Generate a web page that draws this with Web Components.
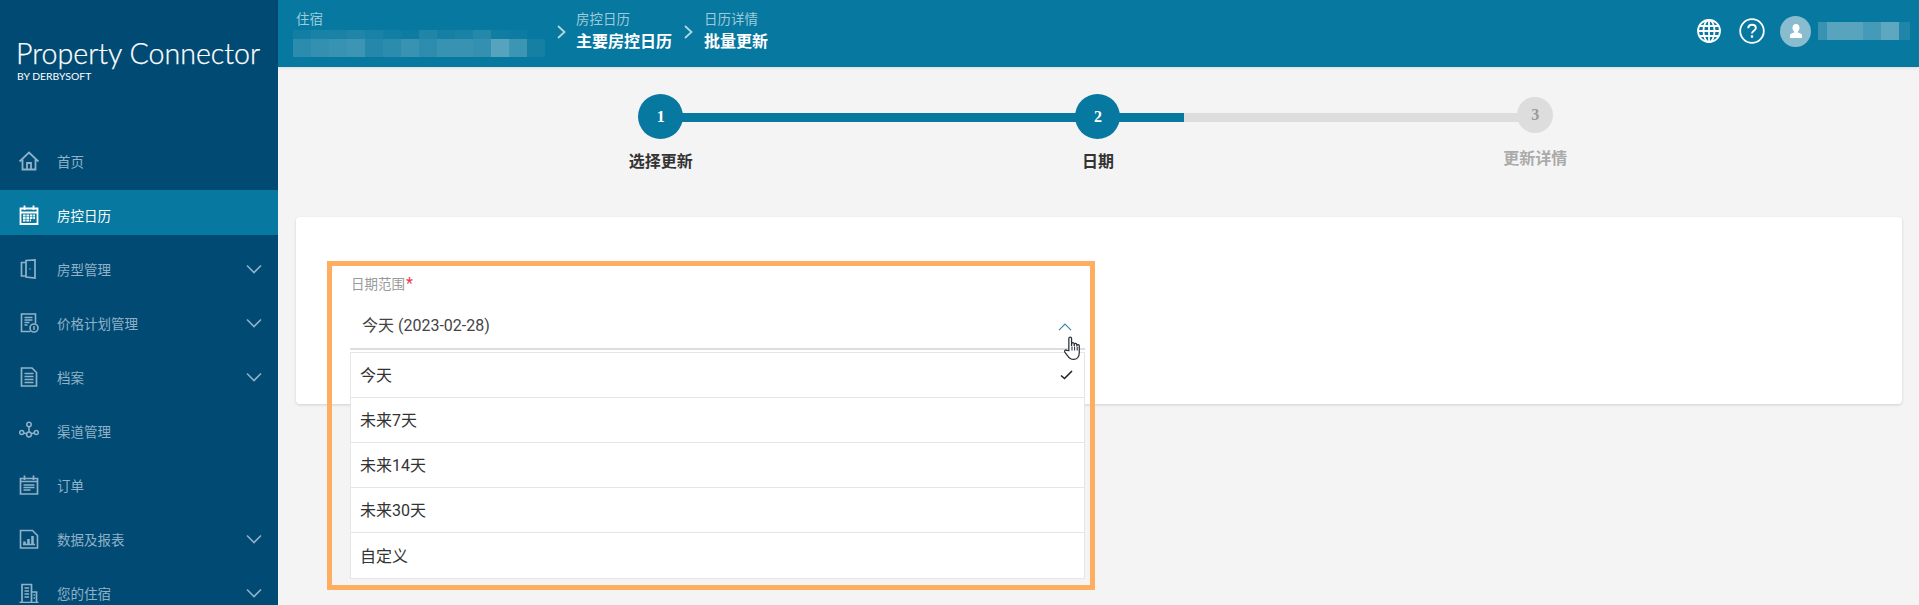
<!DOCTYPE html>
<html lang="zh">
<head>
<meta charset="utf-8">
<title>Property Connector</title>
<style>
  html, body {
    background: #f4f4f4;
    color: #333;
    font-family: Roboto, "Noto Sans CJK SC", sans-serif;
    height: 605px;
    margin: 0;
    overflow: hidden;
  }

  .app {
    display: flex;
    height: 605px;
  }

  .main {
    display: flex;
    flex: 1;
    flex-direction: column;
    min-width: 0;
  }

  .content {
    padding: 0 17px 0 18px;
  }
</style>
</head>
<body>
<div class="app">
  <pc-sidebar>
    <pc-nav-item icon="home" label="首页"></pc-nav-item>
    <pc-nav-item icon="calendar" label="房控日历" active></pc-nav-item>
    <pc-nav-item icon="door" label="房型管理" expandable></pc-nav-item>
    <pc-nav-item icon="rate" label="价格计划管理" expandable></pc-nav-item>
    <pc-nav-item icon="file" label="档案" expandable></pc-nav-item>
    <pc-nav-item icon="channel" label="渠道管理"></pc-nav-item>
    <pc-nav-item icon="order" label="订单"></pc-nav-item>
    <pc-nav-item icon="report" label="数据及报表" expandable></pc-nav-item>
    <pc-nav-item icon="building" label="您的住宿" expandable></pc-nav-item>
  </pc-sidebar>

  <div class="main">
    <pc-topbar>
      <pc-crumb label="住宿" blurred></pc-crumb>
      <pc-crumb label="房控日历" value="主要房控日历" separated></pc-crumb>
      <pc-crumb label="日历详情" value="批量更新" separated></pc-crumb>
    </pc-topbar>

    <div class="content">
      <pc-stepper>
        <pc-step number="1" label="选择更新"></pc-step>
        <pc-step number="2" label="日期"></pc-step>
        <pc-step number="3" label="更新详情" pending></pc-step>
      </pc-stepper>

      <pc-card>
        <pc-date-select label="日期范围" value="今天 (2023-02-28)">
          <pc-option selected>今天</pc-option>
          <pc-option>未来7天</pc-option>
          <pc-option>未来14天</pc-option>
          <pc-option>未来30天</pc-option>
          <pc-option>自定义</pc-option>
        </pc-date-select>
      </pc-card>
    </div>
  </div>
</div>

<script>
const navIcons = {
  home: `<path d="M.5 10.500 10 1.500l9.500 9M3.500 8.500V18.500h13V8.500M8 18.500v-6.500h4v6.500" stroke-width="1.800" />`,
  calendar: `<path d="M1.500 3.500h17v15.500h-17zM1.500 7.500h17M5.500 .5v4.500M14.500 .5v4.500" stroke-width="1.800" />
    <path d="M4 10.500h12M4 13h12M4 15.500h8" stroke-width="1.900" stroke-dasharray="2.600 .8" />`,
  door: `<path d="M7 3.500H2.500v13.500H7M7 1.500l9-.5v18l-9-1zM10.500 10h1" stroke-width="1.700" />`,
  rate: `<path d="M11.500 18.500H2.500V1h14v9.500M5.500 4.500h8M5.500 7h8M5.500 9.500h5M5.500 12h3" stroke-width="1.600" />
    <circle cx="15" cy="15" r="4" stroke-width="1.600" /><path d="M15 13v4" stroke-width="1.500" />`,
  file: `<path d="M2.500 1h10.500l4.500 4.500V19H2.500zM5.500 6.500h9M5.500 9.500h9M5.500 12.500h9M5.500 15.500h9" stroke-width="1.700" />`,
  channel: `<circle cx="10" cy="3.500" r="2.200" /><circle cx="10" cy="13.500" r="2.400" />
    <circle cx="2.700" cy="11.500" r="2" /><circle cx="17.300" cy="11.500" r="2" />
    <path d="M10 5.700v5.400M4.700 12l3 .8M15.300 12l-3 .8" />`,
  order: `<path d="M1.500 3.500h17v15.500h-17zM5.500 .5v4.500M14.500 .5v4.500M1.500 6.500h17M4.500 10h11M4.500 12.500h11M4.500 15h7" stroke-width="1.700" />`,
  report: `<path d="M1.500 1.500h12l5 5V19h-17zM4 15.500h12" stroke-width="1.600" />
    <path d="M5.500 15v-2.500M9.500 15v-5M13.500 15V7" stroke-width="2.600" />`,
  building: `<path d="M.5 19.500h19M3 19V1.500h9.500V19M12.500 9h5v10M5.500 5h4.500M5.500 8h4.500M5.500 11h4.500M5.500 14h4.500M14.500 12h1.500M14.500 15h1.500" stroke-width="1.700" />`,
};

class PcSidebar extends HTMLElement {
  constructor() {
    super();
    this.attachShadow({ mode: "open" }).innerHTML = `
      <style>
        :host {
          background: #014a73;
          display: block;
          flex: none;
          height: 605px;
          overflow: hidden;
          width: 278px;
        }

        .logo {
          box-sizing: border-box;
          color: #fff;
          font-family: Lato, sans-serif;
          height: 136px;
          padding: 35px 0 0 16px;
        }

        .name {
          -webkit-text-stroke: 0.25px #fff;
          font-size: 28.6px;
          font-weight: 300;
          line-height: 36px;
          white-space: nowrap;
        }

        .by {
          font-size: 10.4px;
          line-height: 12px;
          margin-top: -1px;
          padding-left: 1px;
        }
      </style>
      <div class="logo">
        <div class="name">Property Connector</div>
        <div class="by">BY DERBYSOFT</div>
      </div>
      <slot></slot>
    `;
  }
}

class PcNavItem extends HTMLElement {
  connectedCallback() {
    const expandable = this.hasAttribute("expandable");
    const icon = navIcons[this.getAttribute("icon")] || "";
    this.attachShadow({ mode: "open" }).innerHTML = `
      <style>
        :host {
          align-items: center;
          box-sizing: border-box;
          color: #8fb2c8;
          display: flex;
          font-size: 13.5px;
          height: 45px;
          margin-bottom: 9px;
          padding: 5px 16px 0 19px;
        }

        :host([active]) {
          background: #07789f;
          color: #fff;
        }

        svg {
          fill: none;
          stroke: currentColor;
          stroke-width: 1.500;
        }

        .icon {
          flex: none;
          height: 20px;
          margin-right: 18px;
          width: 20px;
        }

        .label {
          flex: 1;
        }

        .chevron {
          height: 10px;
          width: 16px;
        }
      </style>
      <svg class="icon" viewBox="0 0 20 20">${icon}</svg>
      <span class="label">${this.getAttribute("label")}</span>
      ${expandable ? `<svg class="chevron" viewBox="0 0 16 10"><path d="M1 1.500 8 8.500l7-7" stroke-width="1.600" /></svg>` : ""}
    `;
  }
}

class PcTopbar extends HTMLElement {
  constructor() {
    super();
    this.attachShadow({ mode: "open" }).innerHTML = `
      <style>
        :host {
          align-items: center;
          background: #07789f;
          box-shadow: 0 1px 3px rgba(0, 0, 0, 0.1);
          box-sizing: border-box;
          color: #fff;
          display: flex;
          flex: none;
          height: 67px;
          padding: 0 9px 0 15px;
        }

        .crumbs {
          display: flex;
          flex: 1;
        }

        .tools {
          align-items: center;
          display: flex;
          margin-top: -5px;
        }

        svg {
          display: block;
        }

        .globe {
          margin-right: 17px;
        }

        .help {
          margin-right: 15px;
        }

        .avatar {
          align-items: center;
          background: #8abccf;
          border-radius: 50%;
          display: flex;
          height: 31px;
          justify-content: center;
          margin-right: 7px;
          width: 31px;
        }
      </style>
      <div class="crumbs"><slot></slot></div>
      <div class="tools">
        <svg class="globe" width="26" height="26" viewBox="0 0 26 26" fill="none" stroke="#fff" stroke-width="1.800">
          <circle cx="13" cy="13" r="11" />
          <ellipse cx="13" cy="13" rx="5.500" ry="11" />
          <path d="M13 2v22M2 13h22M3.500 8h19M3.500 18h19" />
        </svg>
        <svg class="help" width="26" height="26" viewBox="0 0 26 26" fill="none" stroke="#fff">
          <circle cx="13" cy="13" r="11.800" stroke-width="1.800" />
          <path d="M9.300 10.300c0-2.300 1.700-3.500 3.800-3.500 2.200 0 3.700 1.300 3.700 3.200 0 2.800-3.800 2.800-3.800 5.600" stroke-width="2" />
          <path d="M13 17.300v2.400" stroke-width="2.300" />
        </svg>
        <div class="avatar">
          <svg width="16" height="16" viewBox="0 0 16 16" fill="#fff">
            <path d="M8 1c2.200 0 3.500 1.600 3.500 3.800 0 1.700-.7 3-1.600 3.800v1c1.800.5 4.100 1.200 4.100 2.900V15H2v-2.500c0-1.700 2.300-2.400 4.100-2.900v-1C5.200 7.800 4.500 6.500 4.500 4.800 4.500 2.600 5.800 1 8 1z" />
          </svg>
        </div>
        <pc-mosaic cells=".2:9,.33:18,.33:18,.25:18,.35:18,.1:11" height="18"></pc-mosaic>
      </div>
    `;
  }
}

// pixelated block that hides a name in the reference picture
class PcMosaic extends HTMLElement {
  connectedCallback() {
    const height = this.getAttribute("height");
    const cells = this.getAttribute("cells")
      .split(",")
      .map((cell) => {
        const [alpha, width] = cell.split(":");
        return `<i style="width:${width}px;background:rgba(255,255,255,${alpha})"></i>`;
      })
      .join("");
    this.attachShadow({ mode: "open" }).innerHTML = `
      <style>
        :host {
          display: flex;
          height: ${height}px;
        }

        i {
          display: block;
          height: 100%;
        }
      </style>
      ${cells}
    `;
  }
}

class PcCrumb extends HTMLElement {
  connectedCallback() {
    const separated = this.hasAttribute("separated");
    const blurred = this.hasAttribute("blurred");
    const value = blurred
      ? `<pc-mosaic class="top" cells=".05:18,.08:18,.08:18,.1:18,.08:18,.05:18,.03:18,.1:18,.06:18,.08:18,.12:18,.04:18,.03:18" height="9"></pc-mosaic>
         <pc-mosaic cells=".15:18,.18:18,.2:18,.22:18,.12:18,.15:18,.2:18,.16:18,.2:18,.2:18,.18:18,.32:18,.22:18,.06:18" height="18"></pc-mosaic>`
      : `<div class="value">${this.getAttribute("value")}</div>`;
    this.attachShadow({ mode: "open" }).innerHTML = `
      <style>
        :host {
          display: flex;
        }

        .sep {
          height: 14px;
          margin: 15px -1px 0 12px;
          width: 9px;
        }

        .text {
          margin-left: 11px;
        }

        :host([blurred]) .text {
          margin-left: 0;
        }

        :host(:last-child) .text {
          margin-left: 12px;
        }

        .label {
          color: #9ecbdb;
          font-size: 13.5px;
          line-height: 19px;
          padding-left: 3px;
        }

        :host([separated]) .label {
          padding-left: 0;
        }

        .top {
          margin-top: 1px;
        }

        .value {
          font-size: 16px;
          font-weight: 700;
          line-height: 24px;
          margin-top: 1px;
          white-space: nowrap;
        }
      </style>
      ${separated ? `<svg class="sep" viewBox="0 0 9 14" fill="none" stroke="#b4d6e2" stroke-width="1.800"><path d="m1 1 6.500 6L1 13" /></svg>` : ""}
      <div class="text">
        <div class="label">${this.getAttribute("label")}</div>
        ${value}
      </div>
    `;
  }
}

class PcStepper extends HTMLElement {
  constructor() {
    super();
    this.attachShadow({ mode: "open" }).innerHTML = `
      <style>
        :host {
          box-sizing: border-box;
          display: grid;
          grid-template-columns: repeat(3, 1fr);
          height: 150px;
          margin: 0 auto;
          padding: 27px 2px 0 0;
          position: relative;
          width: 1314px;
        }

        /* progress line runs behind the circles */
        .track {
          background: linear-gradient(90deg, #07789f 59.8%, #ddd 59.8%);
          height: 9px;
          left: 219px;
          position: absolute;
          right: 220px;
          top: 46px;
        }
      </style>
      <div class="track"></div>
      <slot></slot>
    `;
  }
}

class PcStep extends HTMLElement {
  connectedCallback() {
    this.attachShadow({ mode: "open" }).innerHTML = `
      <style>
        :host {
          align-items: center;
          display: flex;
          flex-direction: column;
          position: relative;
        }

        .circle {
          align-items: center;
          background: #07789f;
          border-radius: 50%;
          color: #fff;
          display: flex;
          font-family: "Liberation Serif", serif;
          font-size: 16px;
          font-weight: 700;
          height: 45px;
          justify-content: center;
          width: 45px;
        }

        .label {
          color: #333;
          font-size: 16px;
          font-weight: 700;
          line-height: 24px;
          margin-top: 11px;
        }

        :host([pending]) .circle {
          background: #ddd;
          color: #999;
          height: 36px;
          margin-top: 3px;
          width: 36px;
        }

        :host([pending]) .label {
          color: #aaa;
          margin-top: 14px;
        }
      </style>
      <div class="circle">${this.getAttribute("number")}</div>
      <div class="label">${this.getAttribute("label")}</div>
    `;
  }
}

class PcCard extends HTMLElement {
  constructor() {
    super();
    this.attachShadow({ mode: "open" }).innerHTML = `
      <style>
        :host {
          background: #fff;
          border-radius: 4px;
          box-shadow: 0 1px 3px rgba(0, 0, 0, 0.15);
          box-sizing: border-box;
          display: block;
          height: 187px;
          padding: 57px 54px 0;
        }
      </style>
      <slot></slot>
    `;
  }
}

class PcDateSelect extends HTMLElement {
  connectedCallback() {
    this.attachShadow({ mode: "open" }).innerHTML = `
      <style>
        :host {
          display: block;
          position: relative;
          width: 735px;
        }

        .label {
          color: #999;
          font-size: 13.5px;
          line-height: 20px;
          padding-left: 1px;
        }

        .label b {
          color: #f0394d;
          font-size: 16px;
          font-weight: 400;
          line-height: 16px;
          margin-left: 1px;
        }

        .trigger {
          align-items: center;
          border-bottom: 2px solid #ddd;
          box-sizing: border-box;
          color: #444;
          display: flex;
          font-size: 16px;
          height: 46px;
          justify-content: space-between;
          margin-top: 10px;
          padding: 0 13px 4px 12px;
        }

        .trigger svg {
          margin-top: 5px;
        }

        .list {
          background: #fff;
          border: 1px solid #e6e6e6;
          box-sizing: border-box;
          left: 0;
          position: absolute;
          right: 0;
          top: 78px;
        }

        /* orange annotation frame drawn on top of the form */
        .frame {
          border: 5px solid #ffad60;
          box-sizing: border-box;
          height: 329px;
          left: -23px;
          pointer-events: none;
          position: absolute;
          top: -13px;
          width: 768px;
        }

        .hand {
          left: 713px;
          position: absolute;
          top: 62px;
        }
      </style>
      <div class="label">${this.getAttribute("label")}<b>*</b></div>
      <div class="trigger">
        <span>${this.getAttribute("value")}</span>
        <svg width="14" height="8" viewBox="0 0 14 8" fill="none" stroke="#3a87ad" stroke-width="1.200"><path d="M1 7.200 7 1l6 6.200" /></svg>
      </div>
      <div class="list"><slot></slot></div>
      <div class="frame"></div>
      <svg class="hand" width="19" height="25" viewBox="0 0 17 24" fill="#fff" stroke="#2a2f3a" stroke-width="1.200">
        <path d="M5 14V2.500C5 1.500 5.600 1 6.300 1s1.300.5 1.300 1.500V9.500l.1-2c0-1.400 2.300-1.400 2.400 0l.1 2 .1-1.500c.1-1.300 2.200-1.300 2.300.1l.1 2 .1-1.100c.2-1.200 2.200-1.100 2.200.3v6.700c0 4-2.300 6.500-5.500 6.500-2.700 0-4.400-1.400-5.500-3.300L1.100 15.400c-.8-1.300.9-2.600 2-1.500z" />
        <path d="M8 10v4M10.500 10v4M13 10.500v3.500" fill="none" stroke-width="1" />
      </svg>
    `;
  }
}

class PcOption extends HTMLElement {
  connectedCallback() {
    this.attachShadow({ mode: "open" }).innerHTML = `
      <style>
        :host {
          align-items: center;
          border-bottom: 1px solid #e6e6e6;
          box-sizing: border-box;
          color: #333;
          display: flex;
          font-size: 16px;
          height: 45px;
          justify-content: space-between;
          padding: 0 11px 2px 9px;
        }

        :host(:last-child) {
          border-bottom: none;
        }

        svg {
          margin-top: 2px;
        }
      </style>
      <span><slot></slot></span>
      ${this.hasAttribute("selected") ? `<svg width="13" height="10" viewBox="0 0 13 10" fill="none" stroke="#222" stroke-width="1.600"><path d="m1 5.500 3.500 3L12 1" /></svg>` : ""}
    `;
  }
}

customElements.define("pc-sidebar", PcSidebar);
customElements.define("pc-nav-item", PcNavItem);
customElements.define("pc-topbar", PcTopbar);
customElements.define("pc-mosaic", PcMosaic);
customElements.define("pc-crumb", PcCrumb);
customElements.define("pc-stepper", PcStepper);
customElements.define("pc-step", PcStep);
customElements.define("pc-card", PcCard);
customElements.define("pc-date-select", PcDateSelect);
customElements.define("pc-option", PcOption);
</script>
</body>
</html>
